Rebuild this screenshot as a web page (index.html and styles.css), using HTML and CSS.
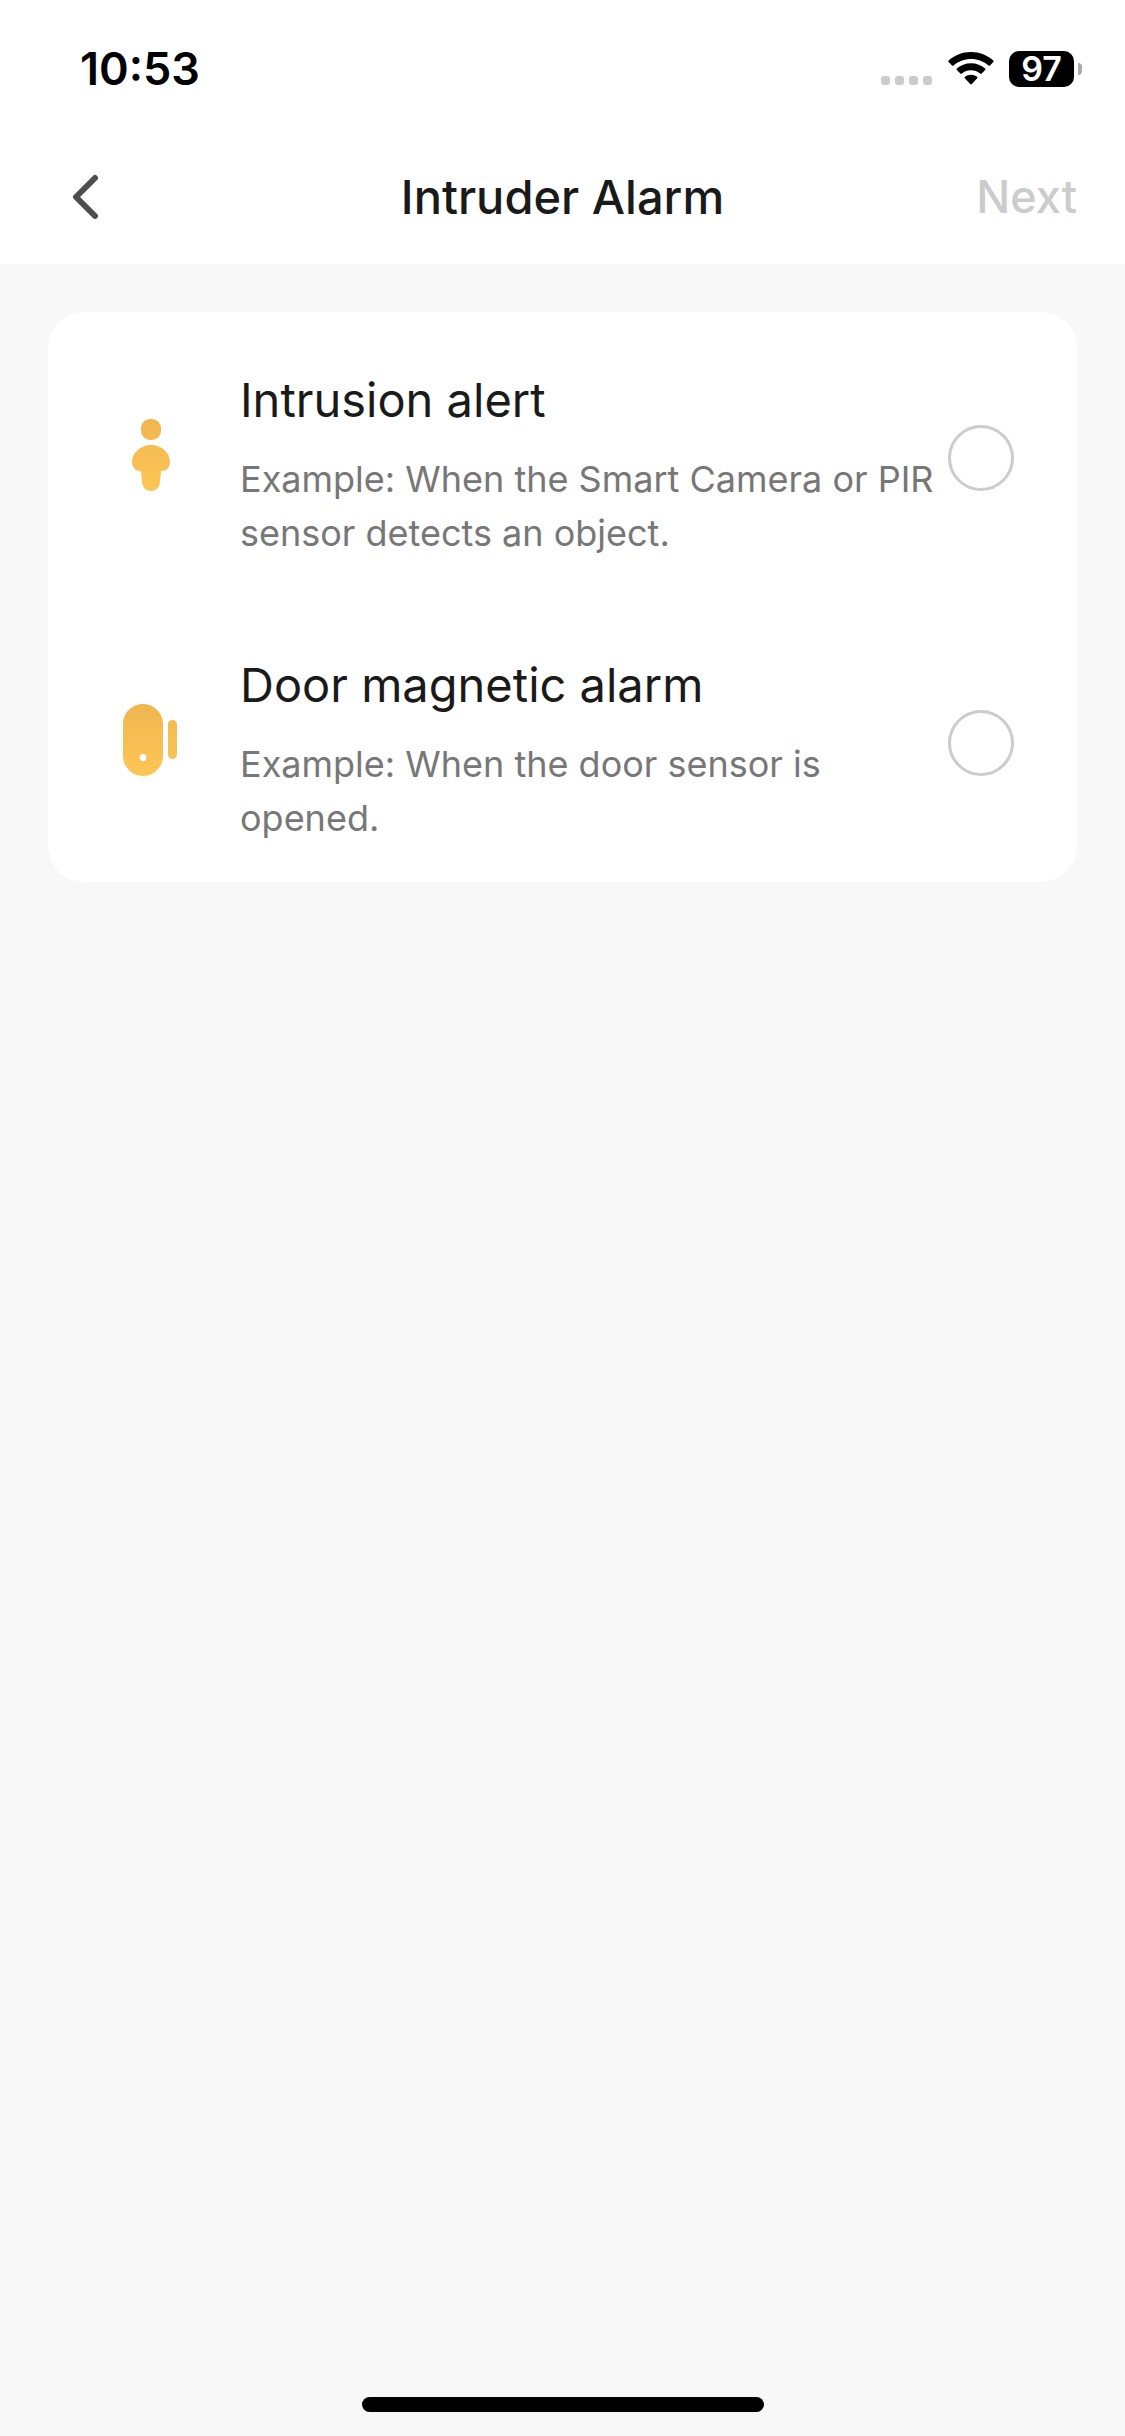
FILE: index.html
```html
<!DOCTYPE html>
<html lang="en">
<head>
<meta charset="utf-8">
<meta name="viewport" content="width=device-width, initial-scale=1">
<title>Intruder Alarm</title>
<link rel="stylesheet" href="styles.css">
</head>
<body>
<div class="screen">
  <div class="status-bar">
    <time class="clock">10:53</time>
    <div class="status-icons">
      <svg class="signal" width="52" height="36" viewBox="0 0 52 36" aria-hidden="true">
        <g fill="#cbcbcb">
          <rect x="0" y="25" width="9" height="9" rx="3"/>
          <rect x="14" y="25" width="9" height="9" rx="3"/>
          <rect x="28" y="25" width="9" height="9" rx="3"/>
          <rect x="42" y="25" width="9" height="9" rx="3"/>
        </g>
      </svg>
      <svg class="wifi" width="46" height="36" viewBox="0 0 46 36" aria-hidden="true">
        <path d="M23 1C14.4 1 6.600 4.200.7 9.500q-.8.800 0 1.600l3.300 3.300q.7.700 1.500 0C10.100 10.300 16.300 7.900 23 7.900s12.900 2.400 17.500 6.500q.8.700 1.500 0l3.300-3.300q.8-.8 0-1.600C39.400 4.200 31.600 1 23 1z"/>
        <path d="M23 12.300c-5.400 0-10.300 2-14.100 5.200q-.8.800 0 1.600l3.400 3.400q.7.700 1.500.1c2.500-2.100 5.700-3.300 9.200-3.300s6.700 1.200 9.200 3.300q.8.600 1.500-.1l3.400-3.400q.8-.8 0-1.600c-3.800-3.200-8.700-5.200-14.100-5.200z"/>
        <path d="M23 23.700c-2.300 0-4.400.8-6.100 2.100q-.8.700-.1 1.500l5.400 5.700q.8.800 1.600 0l5.400-5.700q.7-.8-.1-1.500c-1.700-1.300-3.800-2.100-6.100-2.100z"/>
      </svg>
      <div class="battery"><span class="battery-level">97</span><span class="battery-cap"></span></div>
    </div>
  </div>

  <header class="nav-bar">
    <button class="back" type="button" aria-label="Back">
      <svg width="28" height="46" viewBox="0 0 28 46" aria-hidden="true">
        <path d="M23 4 4 23l19 19" fill="none" stroke="#4d4d4d" stroke-width="6" stroke-linecap="round" stroke-linejoin="round"/>
      </svg>
    </button>
    <h1 class="nav-title">Intruder Alarm</h1>
    <button class="next" type="button" disabled>Next</button>
  </header>

  <main class="content">
    <div class="card" role="radiogroup" aria-label="Alarm type">
      <label class="option" for="intrusion">
        <svg class="option-icon" width="72" height="72" viewBox="0 0 72 72" aria-hidden="true">
          <defs>
            <linearGradient id="amber" gradientUnits="userSpaceOnUse" x1="0" y1="0" x2="0" y2="72">
              <stop offset="0" stop-color="#efb650"/>
              <stop offset="1" stop-color="#fec656"/>
            </linearGradient>
          </defs>
          <g fill="url(#amber)">
            <rect x="26" y="0" width="20" height="21" rx="9"/>
            <path d="M36 26c-11 0-19 8-19 17 0 5 3 9 8 9h1l1 11c.8 6 4 9 9 9s8.200-3 9-9l1-11h1c5 0 8-4 8-9 0-9-8-17-19-17z"/>
          </g>
        </svg>
        <span class="option-text">
          <span class="option-title">Intrusion alert</span>
          <span class="option-hint">Example: When the Smart Camera or PIR sensor detects an object.</span>
        </span>
        <input class="radio" type="radio" name="alarm" id="intrusion">
      </label>
      <label class="option" for="door">
        <svg class="option-icon" width="72" height="72" viewBox="0 0 72 72" aria-hidden="true">
          <g fill="url(#amber)">
            <path fill-rule="evenodd" d="M28 0c11 0 20 9 20 20v32c0 11-9 20-20 20S8 63 8 52V20C8 9 17 0 28 0zm0 50a3.300 3.600 0 1 0 0 7.200 3.300 3.600 0 1 0 0-7.200z"/>
            <rect x="53" y="16" width="9" height="39" rx="4.500"/>
          </g>
        </svg>
        <span class="option-text">
          <span class="option-title">Door magnetic alarm</span>
          <span class="option-hint">Example: When the door sensor is opened.</span>
        </span>
        <input class="radio" type="radio" name="alarm" id="door">
      </label>
    </div>
  </main>
  <div class="home-indicator"></div>
</div>
</body>
</html>
```
FILE: styles.css
```css
* {
  box-sizing: border-box;
}

body {
  margin: 0;
  background: #f8f8f8;
  color: #1a1a1a;
  font-family: Inter, "Liberation Sans", sans-serif;
}

.screen {
  display: flex;
  flex-direction: column;
  min-height: 100vh;
}

.status-bar {
  display: flex;
  align-items: center;
  justify-content: space-between;
  height: 138px;
  padding: 0 43px 0 80px;
  background: #fff;
  color: #000;
}

.clock {
  font-size: 45px;
  font-weight: 600;
  line-height: 54px;
}

.status-icons {
  display: flex;
  align-items: center;
  gap: 15px;
}

.battery {
  display: flex;
  align-items: center;
  gap: 4px;
}

.battery-level {
  width: 65px;
  border-radius: 10px;
  background: #000;
  color: #fff;
  font-size: 34px;
  font-weight: 600;
  line-height: 36px;
  text-align: center;
}

.battery-cap {
  width: 4px;
  height: 12px;
  border-radius: 0 4px 4px 0;
  background: #aaa;
}

.nav-bar {
  display: grid;
  grid-template-columns: 1fr auto 1fr;
  align-items: center;
  height: 126px;
  padding: 0 48px 8px;
  background: #fff;
}

.back,
.next {
  border: 0;
  background: none;
  font: inherit;
}

.back {
  display: flex;
  justify-self: start;
  padding: 0 24px;
}

.nav-title {
  margin: 0;
  font-size: 47px;
  font-weight: 500;
  line-height: 64px;
}

.next {
  justify-self: end;
  padding: 0;
  color: #ccc;
  font-size: 45px;
  font-weight: 500;
  line-height: 64px;
}

.content {
  flex: 1;
  padding: 48px;
}

.card {
  border-radius: 36px;
  background: #fff;
}

.option {
  display: flex;
  align-items: center;
  min-height: 285px;
  padding: 0 63px 0 67px;
}

.option-icon {
  flex: none;
}

.option-text {
  display: flex;
  flex: 1;
  flex-direction: column;
  gap: 20px;
  padding: 18px 12px 0 53px;
}

.option-title {
  font-size: 47px;
  line-height: 64px;
}

.option-hint {
  color: #777;
  font-size: 36px;
  line-height: 54px;
}

.radio {
  flex: none;
  width: 66px;
  height: 66px;
  margin: 6px 0 0;
  border: 3px solid #ccc;
  border-radius: 50%;
  appearance: none;
}

.radio:checked {
  border: 20px solid #fec656;
}

.home-indicator {
  align-self: center;
  width: 402px;
  height: 15px;
  margin-bottom: 24px;
  border-radius: 8px;
  background: #000;
}
```
